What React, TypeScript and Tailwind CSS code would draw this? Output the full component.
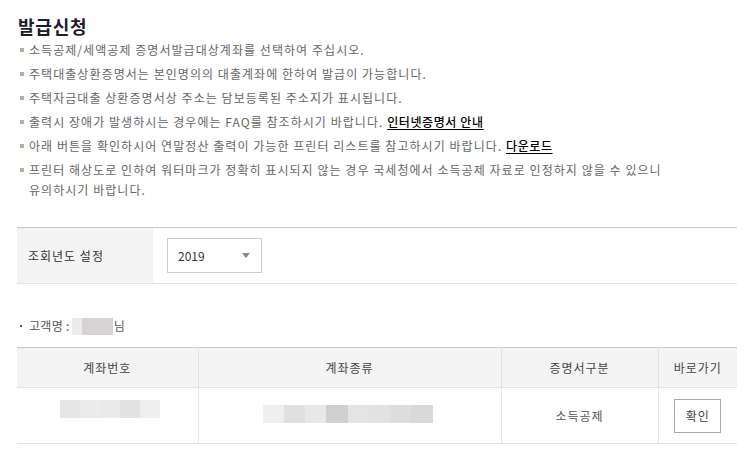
import React from 'react';

const font = { fontFamily: '"Noto Sans CJK KR", "Noto Sans", sans-serif' };

const notes: React.ReactNode[] = [
  '소득공제/세액공제 증명서발급대상계좌를 선택하여 주십시오.',
  '주택대출상환증명서는 본인명의의 대출계좌에 한하여 발급이 가능합니다.',
  '주택자금대출 상환증명서상 주소는 담보등록된 주소지가 표시됩니다.',
  <>출력시 장애가 발생하시는 경우에는 FAQ를 참조하시기 바랍니다. <a className="text-black font-medium underline underline-offset-2 tracking-[0.6px]">인터넷증명서 안내</a></>,
  <>아래 버튼을 확인하시어 연말정산 출력이 가능한 프린터 리스트를 참고하시기 바랍니다. <a className="text-black font-medium underline underline-offset-2 tracking-[0.6px]">다운로드</a></>,
  <>프린터 해상도로 인하여 워터마크가 정확히 표시되지 않는 경우 국세청에서 소득공제 자료로 인정하지 않을 수 있으니<br />유의하시기 바랍니다.</>,
];

function Blur({ w, cells }: { w: number; cells: string[] }) {
  return <div className="flex h-[18px]" style={{ width: w }}>
    {cells.map((c, i) => <div key={i} className="flex-1 h-full" style={{ background: c }} />)}
  </div>;
}

export default function App() {
  return <div className="w-[751px] h-[453px] bg-white overflow-hidden px-[17px] pt-[14px] text-[12px] text-[#666]" style={font}>
    <h1 className="text-[18px] leading-[24px] font-bold text-[#1c1c2c] pl-[1px] tracking-[0.8px]">발급신청</h1>
    <ul className="mt-[2px]">
      {notes.map((n, i) => <li key={i} className="relative pl-[12px] leading-[20px] mb-[4px] tracking-[1.05px]">
        <span className="absolute left-[3px] top-[8px] w-[4px] h-[4px] bg-[#b8b0a8]" />{n}
      </li>)}
    </ul>
    <div className="mt-[27px] w-[720px] flex border-t border-[#c8c8c8] border-b border-b-[#e4e4e4] h-[57px]">
      <div className="w-[136px] bg-[#f4f4f4] flex items-center pl-[11px] text-[#333] text-[12px] tracking-[1px]">조회년도 설정</div>
      <div className="flex items-center pl-[14px]">
        <div className="w-[95px] h-[35px] border border-[#ccc] flex items-center justify-between px-[10px] text-[#333]">
          <span>2019</span>
          <span className="w-0 h-0 border-l-[4px] border-r-[4px] border-t-[5px] border-l-transparent border-r-transparent border-t-[#888] mr-[1px]" />
        </div>
      </div>
    </div>
    <div className="mt-[32px] flex items-center h-[20px] pl-[3px] text-[#555] tracking-[0.3px]">
      <span className="w-[2px] h-[2px] bg-[#555] mr-[7px]" />
      <span>고객명 :</span>
      <div className="flex ml-[2px] h-[17px]"><div className="w-[10px] bg-[#eeebea]" /><div className="w-[31px] bg-[#d6d3d4]" /></div>
      <span className="ml-[1px]">님</span>
    </div>
    <table className="mt-[11px] w-[720px] border-collapse text-center text-[12px] tracking-[1px]">
      <thead>
        <tr className="h-[40px] bg-[#f4f4f4] border-t border-[#c8c8c8] text-[#444]">
          <th className="font-normal w-[181px] border-r border-[#e2e2e2]">계좌번호</th>
          <th className="font-normal w-[303px] border-r border-[#e2e2e2]">계좌종류</th>
          <th className="font-normal w-[157px] border-r border-[#e2e2e2]">증명서구분</th>
          <th className="font-normal">바로가기</th>
        </tr>
      </thead>
      <tbody>
        <tr className="h-[56px] border-t border-b border-[#e4e4e4] text-[#555]">
          <td className="border-r border-[#e4e4e4] align-top pt-[12px]"><div className="ml-[43px]"><Blur w={100} cells={['#e6e6e6', '#ececec', '#eaeaea', '#e2e2e2', '#eeeeee']} /></div></td>
          <td className="border-r border-[#e4e4e4] align-top pt-[17px]"><div className="ml-[64px]"><Blur w={170} cells={['#efefef', '#e0e0e0', '#e8e8e8', '#d0d0d0', '#e4e4e4', '#e2e2e2', '#dddddd', '#d9d9d9']} /></div></td>
          <td className="border-r border-[#e4e4e4]">소득공제</td>
          <td><div className="mx-auto w-[47px] h-[34px] border border-[#aaa] flex items-center justify-center text-[#444]">확인</div></td>
        </tr>
      </tbody>
    </table>
  </div>;
}
